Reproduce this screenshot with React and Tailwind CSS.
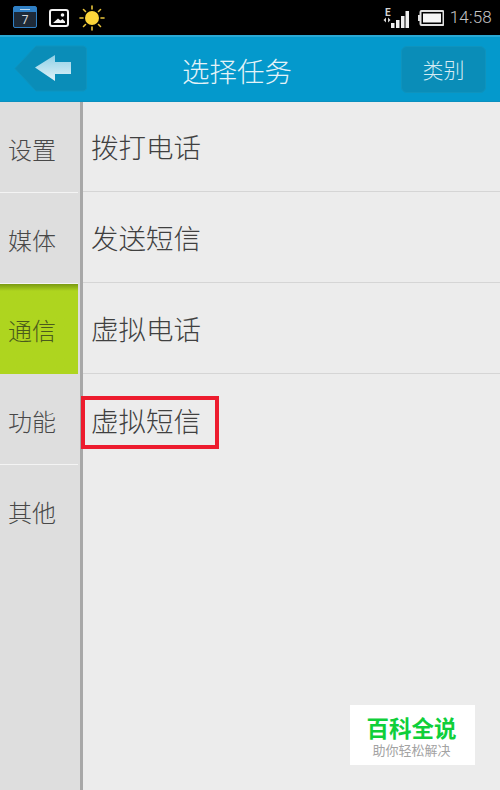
const CJK = "font-['Roboto','Noto_Sans_CJK_SC',sans-serif]";

function Back() {
  return (
    <svg width="74" height="48" viewBox="0 0 74 48" className="block">
      <defs>
        <linearGradient id="ag" x1="0" y1="0" x2="0" y2="1">
          <stop offset="0" stopColor="#8fd0e6" />
          <stop offset="1" stopColor="#e0f2f8" />
        </linearGradient>
      </defs>
      <path d="M1 23.500 L22 1 H68 Q72.500 1 72.500 5 V42 Q72.500 46 68 46 H22 Z" fill="#0a8db8" stroke="#0f93bd" />
      <path d="M21 22.500 L41 10 V17 H57 V29 H41 V36 Z" fill="url(#ag)" />
    </svg>
  );
}

function StatusIcons() {
  return (
    <div className="flex items-center">
      <svg width="25" height="23" viewBox="0 0 25 23" className="ml-[13px]">
        <rect x="0.500" y="0.500" width="23" height="21" rx="1.500" fill="#1e2a38" stroke="#2f7fc4" />
        <rect x="1" y="1" width="22" height="5" fill="#2f7fc4" />
        <rect x="7" y="3" width="10" height="1" fill="#bcd8ee" />
        <text x="12" y="18" fontSize="12" textAnchor="middle" fill="#d8d8d8" fontFamily="Roboto">7</text>
      </svg>
      <svg width="20" height="18" viewBox="0 0 20 18" className="ml-[11px]">
        <rect x="1" y="1" width="18" height="16" rx="2" fill="#000" stroke="#f2f2f2" strokeWidth="2" />
        <path d="M4 14 L9 9.500 L11.500 11.500 L13.500 10 L16 12.500 V14 Z" fill="#f2f2f2" />
        <circle cx="13.500" cy="6" r="1.800" fill="#f2f2f2" />
      </svg>
      <svg width="26" height="26" viewBox="0 0 26 26" className="ml-[10px]">
        <circle cx="13" cy="13" r="7" fill="#fcd53a" />
        <g stroke="#e8c33a" strokeWidth="1.600" strokeLinecap="round">
          <path d="M13 1 V4" /><path d="M13 22 V25" /><path d="M1 13 H4" /><path d="M22 13 H25" />
          <path d="M4.500 4.500 L6.500 6.500" /><path d="M19.500 19.500 L21.500 21.500" /><path d="M4.500 21.500 L6.500 19.500" /><path d="M19.500 6.500 L21.500 4.500" />
        </g>
      </svg>
    </div>
  );
}

function StatusRight() {
  return (
    <div className="flex items-center text-[#c4c4c4]">
      <svg width="26" height="22" viewBox="0 0 26 22" className="mr-[9px]">
        <text x="2" y="9" fontSize="10" fontWeight="700" fill="#d5d5d5" fontFamily="Roboto">E</text>
        <path d="M3 10.500 L0.500 13 L3 15.500 Z M5 10.500 L7.500 13 L5 15.500 Z" fill="#d5d5d5" />
        <rect x="8" y="16" width="3.500" height="5" fill="#eee" />
        <rect x="13" y="13" width="3.500" height="8" fill="#eee" />
        <rect x="18" y="9" width="3.500" height="12" fill="#eee" />
        <rect x="22.500" y="4" width="3.500" height="17" fill="#eee" />
      </svg>
      <svg width="26" height="16" viewBox="0 0 26 16" className="mr-[6px]">
        <rect x="2.500" y="1" width="23" height="14" rx="1" fill="none" stroke="#e0e0e0" strokeWidth="2" />
        <rect x="0" y="5" width="2" height="6" fill="#e0e0e0" />
        <rect x="5" y="3.500" width="18" height="9" fill="#f5f5f5" />
      </svg>
      <span className="font-['Roboto',sans-serif] font-light text-[17px] leading-none tracking-[0.2px]">14:58</span>
    </div>
  );
}

function SideItem({ label, active, last }) {
  return (
    <div className={`${active ? "h-[90px] bg-gradient-to-b from-[#7a9a12] from-[0px] to-[#aed51f] to-[7px] text-[#4a5a1c] pt-[5px]" : last ? "h-[90px] text-[#484848] pt-[7px]" : "h-[91px] border-b border-[#f4f4f4] text-[#484848] pt-[7px]"} flex items-center pl-[8px] text-[24px] font-light`}>
      {label}
    </div>
  );
}

function Row({ label, line = true, boxed }) {
  return (
    <div className={`h-[91px] shrink-0 flex items-center ${boxed ? "pt-[6px]" : "pt-[5px]"} ${line ? "border-b border-[#d5d5d5]" : ""}`}>
      <span className={`${boxed ? "ml-[-2px] h-[53px] w-[138px] border-[4px] border-[#ed1c2e] pl-[6px]" : "ml-[8px]"} flex items-center text-[27.500px] font-light leading-none text-[#404040]`}>
        {label}
      </span>
    </div>
  );
}

export default function App() {
  return (
    <div className={`relative w-[500px] h-[790px] overflow-hidden flex flex-col bg-[#ececec] ${CJK}`}>
      <div className="h-[35px] shrink-0 bg-black flex items-center justify-between pr-[8px]">
        <StatusIcons />
        <StatusRight />
      </div>
      <div className="h-[67px] shrink-0 bg-[#0499cc] border-t-2 border-[#2aa8d4] border-b border-b-[#0a90bf] flex items-center pl-[14px] pr-[14px]">
        <Back />
        <span className="ml-[94px] pt-[8px] text-[27.500px] font-light leading-none text-[#e4f3f8]">选择任务</span>
        <div className="ml-auto w-[85px] h-[47px] rounded-[6px] bg-[#0a8db8] border border-[#0f93bd] flex items-center justify-center pt-[5px] text-[21px] font-light leading-none text-[#d3ebf3]">类别</div>
      </div>
      <div className="flex-1 flex min-h-0">
        <div className="w-[83px] shrink-0 bg-[#dedede] border-r-[3px] border-r-[#a8a8a8] flex flex-col">
          <div className="mr-[2px] flex flex-col">
            <SideItem label="设置" />
            <SideItem label="媒体" />
            <SideItem label="通信" active />
            <SideItem label="功能" />
            <SideItem label="其他" last />
          </div>
        </div>
        <div className="flex-1 flex flex-col">
          <div className="flex flex-col mt-[-1px]">
            <Row label="拨打电话" />
            <Row label="发送短信" />
            <Row label="虚拟电话" />
            <Row label="虚拟短信" line={false} boxed />
          </div>
        </div>
      </div>
      <div className="absolute left-[350px] top-[705px] w-[125px] h-[60px] bg-white flex flex-col items-center justify-center pt-[5px]">
        <span className="text-[22.500px] leading-[25px] font-bold text-[#0fcf3a] ml-[-2px]">百科全说</span>
        <span className="text-[13px] leading-[17px] text-[#a3a3a3] ml-[-2px]">助你轻松解决</span>
      </div>
    </div>
  );
}
